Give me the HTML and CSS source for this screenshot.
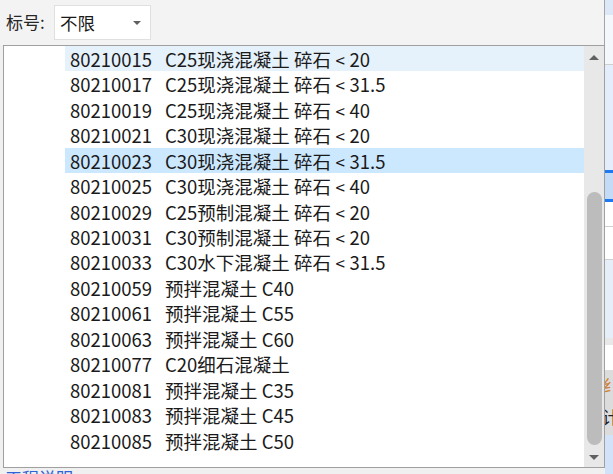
FILE: index.html
```html
<!DOCTYPE html>
<html lang="zh">
<head>
<meta charset="utf-8">
<link rel="stylesheet" href="styles.css">
</head>
<body>
<div class="screen">
  <div class="popup">
    <div class="header">
      <span class="label">标号:</span>
      <div class="combo">
        <span class="combo-text">不限</span>
        <span class="combo-arrow"></span>
      </div>
    </div>
    <div class="body">
      <div class="gutter"></div>
      <div class="listbox">
        <div class="rows">
          <div class="row hover"><span class="code">80210015</span><span class="desc">C25现浇混凝土 碎石<span class="lt">&lt;</span>20</span></div>
          <div class="row"><span class="code">80210017</span><span class="desc">C25现浇混凝土 碎石<span class="lt">&lt;</span>31.5</span></div>
          <div class="row"><span class="code">80210019</span><span class="desc">C25现浇混凝土 碎石<span class="lt">&lt;</span>40</span></div>
          <div class="row"><span class="code">80210021</span><span class="desc">C30现浇混凝土 碎石<span class="lt">&lt;</span>20</span></div>
          <div class="row selected"><span class="code">80210023</span><span class="desc">C30现浇混凝土 碎石<span class="lt">&lt;</span>31.5</span></div>
          <div class="row"><span class="code">80210025</span><span class="desc">C30现浇混凝土 碎石<span class="lt">&lt;</span>40</span></div>
          <div class="row"><span class="code">80210029</span><span class="desc">C25预制混凝土 碎石<span class="lt">&lt;</span>20</span></div>
          <div class="row"><span class="code">80210031</span><span class="desc">C30预制混凝土 碎石<span class="lt">&lt;</span>20</span></div>
          <div class="row"><span class="code">80210033</span><span class="desc">C30水下混凝土 碎石<span class="lt">&lt;</span>31.5</span></div>
          <div class="row"><span class="code">80210059</span><span class="desc">预拌混凝土 C40</span></div>
          <div class="row"><span class="code">80210061</span><span class="desc">预拌混凝土 C55</span></div>
          <div class="row"><span class="code">80210063</span><span class="desc">预拌混凝土 C60</span></div>
          <div class="row"><span class="code">80210077</span><span class="desc">C20细石混凝土</span></div>
          <div class="row"><span class="code">80210081</span><span class="desc">预拌混凝土 C35</span></div>
          <div class="row"><span class="code">80210083</span><span class="desc">预拌混凝土 C45</span></div>
          <div class="row"><span class="code">80210085</span><span class="desc">预拌混凝土 C50</span></div>
        </div>
        <div class="scrollbar">
          <div class="arrow up"></div>
          <div class="track"><div class="thumb"></div></div>
          <div class="arrow down"></div>
        </div>
      </div>
    </div>
    <div class="footer"><span class="footer-text">工程说明</span></div>
  </div>
  <div class="strip">
    <div class="s s1"></div>
    <div class="s s2"></div>
    <div class="s s3"></div>
    <div class="s s4"></div>
    <div class="s s5"></div>
    <div class="s s6"></div>
    <div class="s s7"></div>
    <div class="s s8"></div>
    <div class="s s9"></div>
    <div class="s s10"></div>
    <div class="s s11"></div>
    <div class="s s12"><span class="glyph orange">纟</span></div>
    <div class="s s13"><span class="glyph">计</span></div>
    <div class="s s14"></div>
  </div>
</div>
</body>
</html>
```
FILE: styles.css
```css
* { box-sizing: border-box; }
html, body { margin: 0; padding: 0; }
body {
  width: 613px;
  height: 474px;
  overflow: hidden;
  background: #f0f0f0;
  font-family: "Noto Sans CJK SC", "Noto Sans", sans-serif;
  color: #1a1a1a;
}
.screen { display: flex; width: 613px; height: 474px; }
.popup {
  width: 605px;
  height: 474px;
  display: flex;
  flex-direction: column;
  flex: none;
}
.header {
  height: 45px;
  flex: none;
  background: #f3f3f3;
  border-right: 1px solid #a5a5a5;
  display: flex;
  align-items: flex-start;
  padding-top: 5px;
}
.label {
  font-size: 17px;
  line-height: 34px;
  color: #262626;
  margin-left: 6px;
  width: 48px;
}
.combo {
  width: 97px;
  height: 35px;
  background: #fff;
  border: 1px solid #e0e0e0;
  display: flex;
  align-items: center;
  padding-left: 5px;
}
.combo-text { font-size: 17.5px; color: #1a1a1a; flex: 1; line-height: 33px; }
.combo-arrow {
  width: 0; height: 0;
  border-left: 4px solid transparent;
  border-right: 4px solid transparent;
  border-top: 4px solid #606060;
  margin-right: 9px;
}
.body { display: flex; height: 423px; flex: none; }
.gutter { width: 3px; flex: none; }
.listbox {
  flex: none;
  width: 602px;
  height: 423px;
  border: 1px solid #a0a0a0;
  background: #fff;
  display: flex;
}
.rows { width: 580px; padding-left: 61px; flex: none; }
.row {
  height: 25.47px;
  display: flex;
  align-items: center;
  padding-left: 5px;
  font-size: 18.5px;
  white-space: nowrap;
}
.row.hover { background: #e5f1fb; }
.row.selected { background: #cce8ff; }
.code { width: 81px; }
.desc { margin-left: 14px; }
.lt { display: inline-block; width: 18.5px; text-align: center; font-size: 17px; }
.scrollbar {
  width: 20px;
  flex: none;
  background: #e8e8e8;
  display: flex;
  flex-direction: column;
  align-items: center;
}
.arrow { width: 0; height: 0; border-left: 5px solid transparent; border-right: 5px solid transparent; }
.arrow.up { border-bottom: 5px solid #606060; margin-top: 9px; }
.arrow.down { border-top: 5px solid #606060; margin-bottom: 7px; }
.track { flex: 1; width: 100%; padding-top: 132px; padding-bottom: 7px; display: flex; justify-content: center; }
.thumb { width: 15px; height: 253px; background: #bcbcbc; border-radius: 8px; }
.footer { flex: 1; overflow: hidden; }
.footer-text {
  display: block;
  margin-left: 5px;
  margin-top: 1px;
  font-size: 17px;
  line-height: 17px;
  color: #2f62d6;
}
.strip { width: 8px; flex: none; display: flex; flex-direction: column; overflow: hidden; }
.s { flex: none; width: 8px; overflow: hidden; }
.s1 { height: 15px; background: #dce8f8; }
.s2 { height: 50px; background: #f4f8fd; border-bottom: 1px solid #cfcfcf; }
.s3 { height: 105px; background: #e3edfb; }
.s4 { height: 3px; background: #1e78f0; }
.s5 { height: 26px; background: #c4dbf8; }
.s6 { height: 3px; background: #1e78f0; }
.s7 { height: 25px; background: #fff; border-bottom: 1px solid #d0d0d0; }
.s8 { height: 33px; background: #fff; border-bottom: 1px solid #d0d0d0; }
.s9 { height: 78px; background: #e6eefa; }
.s10 { height: 7px; background: #e8e8e8; }
.s11 { height: 25px; background: #fff; }
.s12 { height: 32px; background: #dcdcdc; }
.s13 { height: 33px; background: #dcdcdc; }
.s14 { height: 40px; background: #d2e2f8; }
.glyph { display: block; font-size: 17px; line-height: 30px; margin-left: -3px; color: #222; }
.glyph.orange { color: #d08030; }
```
